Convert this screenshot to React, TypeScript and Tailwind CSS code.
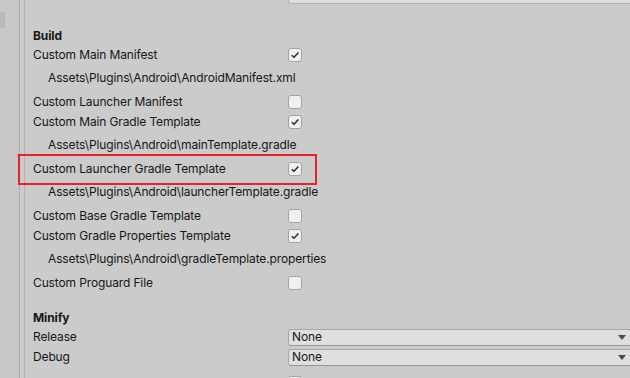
import React from 'react'

type Row =
  | { kind: 'toggle'; label: string; checked: boolean }
  | { kind: 'path'; text: string }

const buildRows: Row[] = [
  { kind: 'toggle', label: 'Custom Main Manifest', checked: true },
  { kind: 'path', text: 'Assets\\Plugins\\Android\\AndroidManifest.xml' },
  { kind: 'toggle', label: 'Custom Launcher Manifest', checked: false },
  { kind: 'toggle', label: 'Custom Main Gradle Template', checked: true },
  { kind: 'path', text: 'Assets\\Plugins\\Android\\mainTemplate.gradle' },
  { kind: 'toggle', label: 'Custom Launcher Gradle Template', checked: true },
  { kind: 'path', text: 'Assets\\Plugins\\Android\\launcherTemplate.gradle' },
  { kind: 'toggle', label: 'Custom Base Gradle Template', checked: false },
  { kind: 'toggle', label: 'Custom Gradle Properties Template', checked: true },
  { kind: 'path', text: 'Assets\\Plugins\\Android\\gradleTemplate.properties' },
  { kind: 'toggle', label: 'Custom Proguard File', checked: false },
]

function Checkbox({ checked }: { checked: boolean }) {
  return (
    <div className="w-[14px] h-[14px] shrink-0 rounded-[3px] border border-[#a3a3a3] bg-[#f0f0f0] flex items-center justify-center">
      {checked && (
        <svg width="10" height="10" viewBox="0 0 10 10">
          <path d="M1.8 5.2 L4 7.3 L8.4 2.6" fill="none" stroke="#2a2a2a" strokeWidth="1.5" />
        </svg>
      )}
    </div>
  )
}

function Dropdown({ value }: { value: string }) {
  return (
    <div className="h-[17px] w-[348px] shrink-0 flex items-center justify-between rounded-[3px] border border-[#a8a8a8] border-b-[#959595] bg-[#dfdfdf] pl-[3px] pr-[9px]">
      <span>{value}</span>
      <svg width="8" height="5" viewBox="0 0 8 5">
        <path d="M0 0 H8 L4 5 Z" fill="#4a4a4a" />
      </svg>
    </div>
  )
}

function ToggleRow({ label, checked }: { label: string; checked: boolean }) {
  return (
    <div className="h-[20px] flex items-center">
      <div className="w-[255px] shrink-0">{label}</div>
      <Checkbox checked={checked} />
    </div>
  )
}

export default function App() {
  return (
    <div
      className="w-[630px] h-[378px] overflow-hidden flex bg-[#cbcbcb] text-[12px] tracking-[-0.13px] text-[#161616] relative"
      style={{ fontFamily: 'Inter, "Noto Sans", sans-serif' }}
    >
      {/* left gutter */}
      <div className="w-[20px] shrink-0 bg-[#c7c7c7] border-r border-[#aaaaaa] pt-[12px]">
        <div className="w-[5px] h-[16px] bg-[#b9b9b9]" />
      </div>
      <div className="w-[5px] shrink-0 bg-[#cbcbcb] border-r border-[#b2b2b2]" />

      {/* inspector content */}
      <div className="flex-1 min-w-0 pl-[8px]">
        <div className="h-[4px] flex">
          <div className="w-[255px] shrink-0" />
          <div className="flex-1 bg-[#dfdfdf] border-b border-l border-[#b4b4b4] rounded-bl-[3px]" />
        </div>

        <div className="h-[22px]" />
        <div className="h-[19px] flex items-center font-bold">Build</div>

        {buildRows.map((r, i) =>
          r.kind === 'toggle' ? (
            <ToggleRow key={i} label={r.label} checked={r.checked} />
          ) : (
            <div key={i} className="h-[27px] flex items-center pl-[15px] pb-[1px]">
              {r.text}
            </div>
          ),
        )}

        <div className="h-[16px]" />
        <div className="h-[18px] flex items-center font-bold">Minify</div>
        <div className="h-[20px] flex items-center">
          <div className="w-[255px] shrink-0">Release</div>
          <Dropdown value="None" />
        </div>
        <div className="h-[20px] flex items-center">
          <div className="w-[255px] shrink-0">Debug</div>
          <Dropdown value="None" />
        </div>
        <div className="h-[9px]" />
        <div className="h-[20px] flex items-start">
          <div className="w-[255px] shrink-0" />
          <Checkbox checked={false} />
        </div>
      </div>

      {/* red annotation box */}
      <div className="absolute left-[18px] top-[154px] w-[299px] h-[31px] border-2 border-[#e5232b] pointer-events-none" />
    </div>
  )
}
